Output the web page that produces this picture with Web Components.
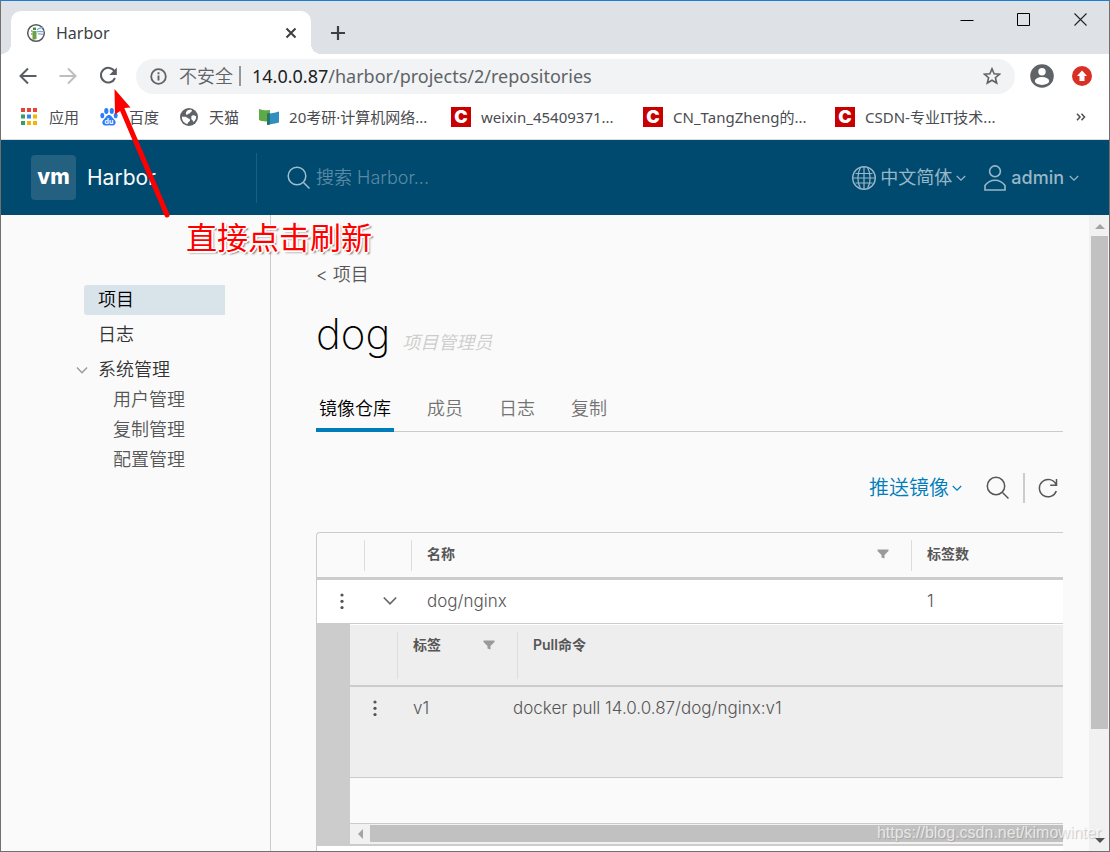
<!DOCTYPE html>
<html lang="zh-CN">
<head>
<meta charset="utf-8">
<title>Harbor</title>
<style>
  html, body { margin: 0; height: 100%; }
  body { font-family: "Noto Sans", "Noto Sans CJK SC", sans-serif; overflow: hidden; }
</style>
</head>
<body>
<browser-window>
  <tab-strip slot="chrome" label="Harbor"></tab-strip>
  <address-bar slot="chrome"></address-bar>
  <bookmark-bar slot="chrome">
    <bookmark-item icon="apps">应用</bookmark-item>
    <bookmark-item icon="baidu">百度</bookmark-item>
    <bookmark-item icon="globe">天猫</bookmark-item>
    <bookmark-item icon="book" wide>20考研·计算机网络...</bookmark-item>
    <bookmark-item icon="csdn" wide>weixin_45409371...</bookmark-item>
    <bookmark-item icon="csdn" wide>CN_TangZheng的...</bookmark-item>
    <bookmark-item icon="csdn" wide>CSDN-专业IT技术...</bookmark-item>
  </bookmark-bar>
  <harbor-header></harbor-header>
  <harbor-body>
    <side-nav slot="nav"></side-nav>
    <repo-page></repo-page>
  </harbor-body>
  <note-overlay slot="overlay"></note-overlay>
</browser-window>

<script>
const RESET = `
  :host, *, *::before, *::after { box-sizing: border-box; }
  button, input { font: inherit; color: inherit; background: none; border: 0; padding: 0; margin: 0; outline: 0; }
  a { color: inherit; text-decoration: none; }
  svg { display: block; flex: none; }
`;

function define(name, html) {
  const template = document.createElement('template');
  template.innerHTML = html.replace('<style>', '<style>' + RESET);
  customElements.define(name, class extends HTMLElement {
    constructor() {
      super();
      this.attachShadow({ mode: 'open' }).append(template.content.cloneNode(true));
    }
    connectedCallback() {
      const title = this.shadowRoot.querySelector('[data-label]');
      if (title) title.textContent = this.getAttribute('label');
    }
  });
}

define('browser-window', `
<style>
  :host { display: flex; flex-direction: column; position: relative; height: 100vh;
    overflow: hidden; background: #fff; border: 1px solid #707070; border-top-color: #1a80d6; }
</style>
<slot name="chrome"></slot>
<slot></slot>
<slot name="overlay"></slot>`);

define('tab-strip', `
<style>
  :host { display: flex; flex: none; height: 53px; padding: 10px 0 0 10px; background: #dee1e6; }
  .tab { position: relative; display: flex; align-items: center; width: 300px; padding: 0 12px 0 15px;
    background: #fff; border-radius: 10px 10px 0 0; }
  .tab::before, .tab::after { content: ""; position: absolute; bottom: 0; width: 10px; height: 10px; }
  .tab::before { left: -10px; background: radial-gradient(circle at 0 0, #dee1e6 10px, #fff 10px); }
  .tab::after { right: -10px; background: radial-gradient(circle at 100% 0, #dee1e6 10px, #fff 10px); }
  .title { flex: 1; margin-left: 10px; font-size: 16px; line-height: 24px; color: #3c4043; }
  .new { align-self: center; margin-left: 19px; }
  .win { display: flex; margin-left: auto; margin-top: -10px; height: 38px; }
  .win button { display: grid; place-items: center; width: 57px; }
</style>
<div class="tab">
  <svg width="20" height="20" viewBox="0 0 20 20"><circle cx="10" cy="10" r="8.300" fill="#fff" stroke="#56595c" stroke-width="1.500"/>
    <path d="M6.500 8h4v8l-4 1z" fill="#6aa245"/><path d="M7 4.500h3v2.500H7z" fill="#4d8a3a"/><path d="M5 8h1.500M5 11h1.500" stroke="#56595c"/>
    <path d="M11 7c2-3 4-1 6-3M11 9c3-2 4 1 7-1M12 11c2-1 3 1 5 0" fill="none" stroke="#7ba9d6" stroke-width="1.300"/></svg>
  <span class="title" data-label></span>
  <button aria-label="关闭标签页"><svg width="16" height="16" viewBox="0 0 16 16"><path d="M3.500 3.500l9 9M12.500 3.500l-9 9" stroke="#3c4043" stroke-width="2"/></svg></button>
</div>
<button class="new" aria-label="新标签页"><svg width="16" height="16" viewBox="0 0 16 16"><path d="M8 1v14M1 8h14" stroke="#3c4043" stroke-width="2.200"/></svg></button>
<div class="win">
  <button aria-label="最小化"><svg width="14" height="14" viewBox="0 0 14 14"><path d="M.5 7.500h13" stroke="#000"/></svg></button>
  <button aria-label="最大化"><svg width="14" height="14" viewBox="0 0 14 14"><path d="M.5 .5h12v12h-12z" fill="none" stroke="#000"/></svg></button>
  <button aria-label="关闭"><svg width="14" height="14" viewBox="0 0 14 14"><path d="M.5 .5l12 12M12.500 .5l-12 12" stroke="#222" stroke-width="1.100"/></svg></button>
</div>`);

define('address-bar', `
<style>
  :host { display: flex; flex: none; align-items: center; height: 44px; padding: 0 7px; color: #5f6368; }
  .tool { display: grid; place-items: center; width: 40px; height: 40px; }
  .pill { flex: 1; display: flex; align-items: center; min-width: 0; height: 35px; margin: 0 7px 0 8px; padding: 0 14px;
    border-radius: 18px; background: #f1f3f4; font-size: 18px; line-height: 28px; }
  .secure { display: flex; align-items: center; gap: 12px; }
  .secure span { font-weight: 350; }
  .bar { width: 2px; height: 20px; margin: 0 11px 0 6px; background: #94979b; }
  label { color: #202124; }
  input { flex: 1; min-width: 0; height: 28px; }
</style>
<button class="tool" aria-label="后退"><svg width="20" height="20" viewBox="0 0 20 20"><path d="M18.500 10H3M10 2.500L2.500 10l7.500 7.500" fill="none" stroke="#5a5d61" stroke-width="2"/></svg></button>
<button class="tool" aria-label="前进"><svg width="20" height="20" viewBox="0 0 20 20"><path d="M1.500 10H17M10 2.500l7.500 7.500-7.500 7.500" fill="none" stroke="#bcbec0" stroke-width="2"/></svg></button>
<button class="tool" aria-label="刷新"><svg width="20" height="20" viewBox="0 0 20 20"><path d="M16.600 5.500A7.300 7.300 0 1 0 17 12" fill="none" stroke="#5a5d61" stroke-width="2"/><path d="M18.800 1.500v7.500h-7.500z" fill="#5a5d61"/></svg></button>
<div class="pill">
  <button class="secure"><svg width="17" height="17" viewBox="0 0 17 17"><circle cx="8.500" cy="8.500" r="7.300" fill="none" stroke="#5f6368" stroke-width="1.800"/><path d="M8.500 7.500v5M8.500 4.300v2" stroke="#5f6368" stroke-width="1.900"/></svg><span>不安全</span></button>
  <div class="bar"></div>
  <label for="url">14.0.0.87</label><input id="url" type="text" value="/harbor/projects/2/repositories">
  <button aria-label="收藏"><svg width="18" height="18" viewBox="0 0 18 18"><path d="M9 1.800l2.100 5 5.400.4-4.100 3.500 1.300 5.300L9 13.200 4.300 16l1.300-5.300-4.100-3.500 5.400-.4z" fill="none" stroke="#5f6368" stroke-width="1.600"/></svg></button>
</div>
<button class="tool" aria-label="用户"><svg width="24" height="24" viewBox="0 0 24 24"><circle cx="12" cy="12" r="11.800" fill="#5f6368"/><circle cx="12" cy="7.800" r="3.700" fill="#fff"/><ellipse cx="12" cy="17" rx="7.200" ry="3.900" fill="#fff"/></svg></button>
<button class="tool" aria-label="更新"><svg width="20" height="20" viewBox="0 0 20 20"><circle cx="10" cy="10" r="10" fill="#d93025"/><path d="M10 4.500l5 5.500h-2.500v5h-5v-5H5z" fill="#fff"/></svg></button>`);

define('bookmark-bar', `
<style>
  :host { display: flex; flex: none; align-items: center; gap: 20px; height: 42px; padding: 0 19px 4px 18px; overflow: hidden;
    border-bottom: 1px solid #dadce0; font-size: 15px; line-height: 22px; color: #4a4d51; }
  button { margin-left: auto; width: 18px; height: 18px; display: grid; place-items: center; }
</style>
<slot></slot>
<button aria-label="更多书签"><svg width="10" height="8" viewBox="0 0 10 8"><path d="M1 .8L4 4 1 7.200M5.500.8L8.500 4l-3 3.200" fill="none" stroke="#4a4d51" stroke-width="1.500"/></svg></button>`);

const BOOKMARK_ICONS = {
  apps: `<svg width="20" height="20" viewBox="0 0 20 20"><g fill="#ea4335"><path d="M2 1h4v4H2zM8 1h4v4H8zM14 1h4v4h-4z"/></g><path d="M2 7.500h4v4H2zM2 14h4v4H2z" fill="#34a05c"/><path d="M8 7.500h4v4H8z" fill="#2f86ee"/><path d="M14 7.500h4v4h-4zM8 14h4v4H8zM14 14h4v4h-4z" fill="#f6b504"/></svg>`,
  baidu: `<svg width="20" height="20" viewBox="0 0 20 20"><g fill="#2d7ff5"><ellipse cx="7.300" cy="4" rx="2.100" ry="3"/><ellipse cx="12.800" cy="4" rx="2.100" ry="3"/><ellipse cx="3.300" cy="8.500" rx="2" ry="2.700"/><ellipse cx="16.700" cy="8.500" rx="2" ry="2.700"/><path d="M10 8c2.500 0 3 2.500 5 4.300 3 2.700 1.500 6.200-1 6.200-1.500 0-2.500-.3-4-.3s-2.500.3-4 .3c-2.500 0-4-3.500-1-6.200C7 10.500 7.500 8 10 8z"/></g><text x="10" y="16.500" text-anchor="middle" font-family="Inter, sans-serif" font-weight="700" font-size="7" fill="#fff">du</text></svg>`,
  globe: `<svg width="20" height="20" viewBox="0 0 20 20"><circle cx="10" cy="10" r="9" fill="#5f6368"/><path d="M3 9.500c2 .5 4-.5 5 1s3 .5 3 2.500-2 1.500-2.500 4C5 16.500 2.500 13 3 9.500zM8 4c1.500-1.500 3.500-1.300 5-.8 0 1.500-1.500 1.500-1.800 2.800-1 1-2.700.3-2.900 2C6.500 8 6.500 5 8 4zM12.500 9c1.500-1.200 3-.5 4.700.5 0 3-1.500 4.500-3 5.500-.2-2-1.700-2-2-3.500z" fill="#fff"/></svg>`,
  book: `<svg width="20" height="20" viewBox="0 0 20 20"><path d="M0 2c4 1.500 7 1.500 11 1v11c-4 .8-8 .5-11-1z" fill="#5cab45"/><path d="M8 6.500c4 0 7-.5 12-2v11c-4 1-7 1.500-12 2.500z" fill="#318fc0"/><path d="M8 6.500l3-.2v11.200L8 18z" fill="#24746f"/></svg>`,
  csdn: `<span class="csdn">C</span>`
};
customElements.define('bookmark-item', class extends HTMLElement {
  connectedCallback() {
    if (this.shadowRoot) return;
    this.attachShadow({ mode: 'open' }).innerHTML = `
<style>${RESET}
  :host { display: block; flex: none; }
  :host([wide]) { width: 172px; }
  a { display: flex; align-items: center; gap: 10px; white-space: nowrap; }
  .csdn { display: grid; place-items: center; flex: none; width: 20px; height: 20px; background: #c90000; color: #fff;
    font: 900 18px/20px Inter, sans-serif; }
</style>
<a href="#">${BOOKMARK_ICONS[this.getAttribute('icon')]}<span><slot></slot></span></a>`;
  }
});

const CARET = (color, size = 10) => `<svg width="${size}" height="${size}" viewBox="0 0 10 10"><path d="M.8 3L5 7.200 9.200 3" fill="none" stroke="${color}" stroke-width="1.200"/></svg>`;

define('harbor-header', `
<style>
  :host { display: flex; flex: none; align-items: center; height: 75px; padding: 0 30px; background: #004a70;
    font: 18px/24px Inter, "Noto Sans CJK SC", sans-serif; color: #99b7c6; }
  .brand { display: flex; align-items: center; gap: 11px; width: 225px; font-size: 21px; color: #fafafa; }
  .logo { width: 45px; height: 45px; border-radius: 4px; background: #24607f; font-weight: 800; line-height: 43px; text-align: center; color: #fff; }
  .search { display: flex; align-items: center; flex: 1; gap: 5px; height: 50px; padding-left: 30px; border-left: 1px solid #1c5d80; }
  input { flex: 1; min-width: 0; height: 30px; font-weight: 350; }
  input::placeholder { color: #5a8aa4; opacity: 1; }
  .menu { display: flex; align-items: center; gap: 4px; margin-left: 18px; }
  .user { gap: 5px; font-weight: 500; }
</style>
<a class="brand" href="#"><span class="logo">vm</span><span>Harbor</span></a>
<label class="search"><svg width="24" height="24" viewBox="0 0 24 24" aria-label="搜索"><circle cx="10" cy="10" r="8.800" fill="none" stroke="#a3becb" stroke-width="1.500"/><path d="M16.500 16.500l6 6" stroke="#a3becb" stroke-width="1.500"/></svg>
  <input type="text" placeholder="搜索 Harbor..."></label>
<button class="menu"><svg width="24" height="24" viewBox="0 0 24 24"><g fill="none" stroke="#99b7c6" stroke-width="1.200"><circle cx="12" cy="12" r="11.300" stroke-width="1.400"/><path d="M12 1v22M1 12h22M3.500 7.500h17M3.500 17h17M8.500 1.500c-3.500 6-3.500 15 0 21M15.500 1.500c3.500 6 3.500 15 0 21"/></g></svg><span>中文简体</span>${CARET('#99b7c6')}</button>
<button class="menu user"><svg width="22" height="26" viewBox="0 0 22 26"><g fill="none" stroke="#99b7c6" stroke-width="1.600"><circle cx="11" cy="6.300" r="5.400"/><path d="M1 25v-4.500C3.500 17 7 15.200 11 15.200s7.500 1.800 10 5.300V25z"/></g></svg><span>admin</span>${CARET('#99b7c6')}</button>`);

define('scroll-bar', `
<style>
  :host { display: flex; flex-direction: column; width: 20px; flex: none; background: #f1f1f1; }
  button { display: grid; place-items: center; height: 21px; flex: none; }
  .track { flex: 1; }
  .thumb { height: 83%; background: #c1c1c1; }
</style>
<button aria-label="向上滚动"><svg width="10" height="6" viewBox="0 0 10 6"><path d="M0 6l5-5 5 5z" fill="#a3a3a3"/></svg></button>
<div class="track"><div class="thumb"></div></div>
<button aria-label="向下滚动"><svg width="10" height="6" viewBox="0 0 10 6"><path d="M0 0l5 5 5-5z" fill="#505050"/></svg></button>`);

define('harbor-body', `
<style>
  :host { display: flex; flex: 1; min-height: 0; background: #fafafa; color: #565656;
    font: 350 18px/30px Inter, "Noto Sans CJK SC", sans-serif; }
  main { flex: 1; min-width: 0; padding: 45px 26px 0 45px; overflow: hidden; }
  scroll-bar { padding: 0 1px 0 2px; }
</style>
<slot name="nav"></slot>
<main><slot></slot></main>
<scroll-bar></scroll-bar>`);

define('side-nav', `
<style>
  :host { display: block; flex: none; width: 270px; padding: 70px 45px 0 75px; border-right: 1px solid #ccc; color: #333; }
  nav { display: flex; flex-direction: column; gap: 5px; }
  a { display: block; padding-left: 14px; }
  nav > a { margin-left: 8px; }
  .active { background: #d9e4ea; color: #000; border-radius: 3px 0 0 3px; }
  .group { display: flex; align-items: center; gap: 10px; }
  .sub { padding-left: 23px; color: #565656; }
</style>
<nav>
  <a class="active" href="#">项目</a>
  <a href="#">日志</a>
  <div>
    <button class="group" aria-expanded="true">${CARET('#9a9a9a', 12)}<span>系统管理</span></button>
    <div class="sub"><a href="#">用户管理</a><a href="#">复制管理</a><a href="#">配置管理</a></div>
  </div>
</nav>`);

define('repo-page', `
<style>
  :host { display: block; }
  .crumb { display: block; }
  h1 { display: flex; align-items: baseline; gap: 12px; margin: 20px 0 28px; font-weight: 200; font-size: 42px; line-height: 48px; color: #000; }
  h1 em { font-size: 18px; line-height: 30px; font-weight: 350; color: #ccc; }
  .tabs { display: flex; gap: 30px; height: 46px; box-shadow: inset 0 -1px #ccc; color: #737373; }
  .tabs button { padding: 0 3px; font-weight: 350; }
  .tabs [aria-selected=true] { color: #000; border-bottom: 4px solid #007cbb; padding-top: 4px; }
  .actions { display: flex; justify-content: flex-end; align-items: center; height: 30px; margin: 41px 0 29px; padding-right: 5px; }
  .push { display: flex; align-items: center; gap: 3px; margin-right: 24px; font-size: 20px; color: #007cbb; }
  .rule { width: 2px; height: 30px; margin: 0 13px; background: #ccc; }
</style>
<a class="crumb" href="#">&lt; 项目</a>
<h1>dog<em>项目管理员</em></h1>
<div class="tabs" role="tablist">
  <button role="tab" aria-selected="true">镜像仓库</button>
  <button role="tab">成员</button>
  <button role="tab">日志</button>
  <button role="tab">复制</button>
</div>
<div class="actions">
  <button class="push">推送镜像${CARET('#007cbb')}</button>
  <button aria-label="搜索"><svg width="24" height="24" viewBox="0 0 24 24"><circle cx="10" cy="10" r="8.700" fill="none" stroke="#565656" stroke-width="1.500"/><path d="M16.500 16.500l6 6" stroke="#565656" stroke-width="1.500"/></svg></button>
  <div class="rule"></div>
  <button aria-label="刷新"><svg width="20" height="20" viewBox="0 0 20 20"><path d="M18 6.500A8.700 8.700 0 1 0 18.300 13M18.500 1v6.200h-6.300" fill="none" stroke="#565656" stroke-width="1.500"/></svg></button>
</div>
<repo-grid></repo-grid>`);

const DOTS = `<svg width="4" height="16" viewBox="0 0 4 16"><g fill="#565656"><circle cx="2" cy="2" r="1.600"/><circle cx="2" cy="8.300" r="1.600"/><circle cx="2" cy="14.500" r="1.600"/></g></svg>`;
const FILTER = `<svg width="12" height="10" viewBox="0 0 12 10"><path d="M.5.500h11v1.500L7.500 6v3.500l-3-1V6l-4-4z" fill="#9a9a9a"/></svg>`;
const TABLE = `
  table { width: 100%; table-layout: fixed; border-spacing: 0; border-collapse: separate; }
  th, td { padding: 0 15px; text-align: left; }
  th { font-weight: 600; font-size: 14px; line-height: 20px; }
  td { font-size: 17px; line-height: 24px; }
  th.sep { background: linear-gradient(#ddd, #ddd) right center / 1px calc(100% - 13px) no-repeat; }
  .head { display: flex; align-items: center; justify-content: space-between; }
  td.icon { padding: 0 0 0 2px; }
  td.icon button { display: grid; place-items: center; width: 100%; height: 24px; }
`;

define('repo-grid', `
<style>${TABLE}
  :host { display: block; border: 1px solid #ccc; border-right: 0; border-bottom: 0; border-radius: 4px 0 0 0; overflow: hidden; }
  .c1 { width: 48px; } .c2 { width: 47px; } .c3 { width: 500px; }
  th { height: 47px; padding-bottom: 3px; border-bottom: 3px solid #ccc; }
  th .head { padding-right: 8px; }
  .row td { height: 44px; background: #fff; border-bottom: 1px solid #ccc; padding-bottom: 2px; }
  .detail { padding: 0 0 2px 33px; background: #ccc; }
  .foot { height: 45px; background: #fff; }
</style>
<table>
  <colgroup><col class="c1"><col class="c2"><col class="c3"><col></colgroup>
  <thead><tr><th class="sep"></th><th class="sep"></th><th class="sep"><div class="head">名称<button aria-label="筛选名称">${FILTER}</button></div></th><th>标签数</th></tr></thead>
  <tbody>
    <tr class="row"><td class="icon"><button aria-label="操作">${DOTS}</button></td>
      <td class="icon"><button aria-label="收起" aria-expanded="true"><svg width="14" height="10" viewBox="0 0 14 10"><path d="M.8 1.500L7 7.800l6.200-6.300" fill="none" stroke="#666" stroke-width="1.700"/></svg></button></td>
      <td>dog/nginx</td><td>1</td></tr>
    <tr><td class="detail" colspan="4"><tag-grid></tag-grid></td></tr>
  </tbody>
</table>
<div class="foot"></div>`);

define('tag-grid', `
<style>${TABLE}
  :host { display: block; border-top: 1px solid #fff; }
  .c1 { width: 48px; } .c2 { width: 100px; } .c3 { width: 20px; }
  th { height: 62px; padding-top: 10px; vertical-align: top; background-color: #eee; border-bottom: 2px solid #ccc; }
  th.sep { background-color: #eee; }
  th .head { padding-right: 8px; }
  td { height: 91px; padding-top: 9px; vertical-align: top; background: #eee; border-bottom: 1px solid #ccc; }
  td.icon { padding-top: 9px; }
  .foot { height: 46px; background: #fafafa; border-bottom: 1px solid #ccc; }
  .scroll { display: flex; height: 20px; padding: 1px 0 2px; background: #f1f1f1; }
  .scroll button { display: grid; place-items: center; width: 20px; }
  .thumb { flex: 1; background: #c1c1c1; }
</style>
<table>
  <colgroup><col class="c1"><col class="c2"><col class="c3"><col></colgroup>
  <thead><tr><th class="sep"></th><th class="sep" colspan="2"><div class="head">标签<button aria-label="筛选标签">${FILTER}</button></div></th><th>Pull命令</th></tr></thead>
  <tbody><tr><td class="icon"><button aria-label="操作">${DOTS}</button></td><td>v1</td><td colspan="2">docker pull 14.0.0.87/dog/nginx:v1</td></tr></tbody>
</table>
<div class="foot"></div>
<div class="scroll"><button aria-label="向左滚动"><svg width="6" height="10" viewBox="0 0 6 10"><path d="M6 0L1 5l5 5z" fill="#a3a3a3"/></svg></button><div class="thumb"></div></div>`);

define('note-overlay', `
<style>
  :host { position: absolute; inset: 0; pointer-events: none; }
  svg { position: absolute; left: 109px; top: 86px; }
  .note { position: absolute; left: 185px; top: 215px; font-size: 31px; line-height: 42px; color: #f00; white-space: nowrap;
    text-shadow: -1px -1px #fff, 1px -1px #fff, -1px 1px #fff, 1px 1px #fff, 0 2px #fff, 2px 0 #fff, 2px 2px 2px #555; }
  .mark { position: absolute; right: 8px; bottom: 8px; font: 16px/20px "Liberation Sans", sans-serif; color: rgba(255,255,255,.7);
    text-shadow: 1px 1px 1px rgba(120,120,120,.4); }
</style>
<svg width="64" height="134" viewBox="0 0 64 134"><path d="M12 22L57 128" stroke="#f00" stroke-width="5" stroke-linecap="round"/><path d="M4.500 2L20.500 20.500l-6 .5-9.500 6.500z" fill="#f00"/></svg>
<div class="note">直接点击刷新</div>
<div class="mark">https://blog.csdn.net/kimowinter</div>`);
</script>
</body>
</html>
